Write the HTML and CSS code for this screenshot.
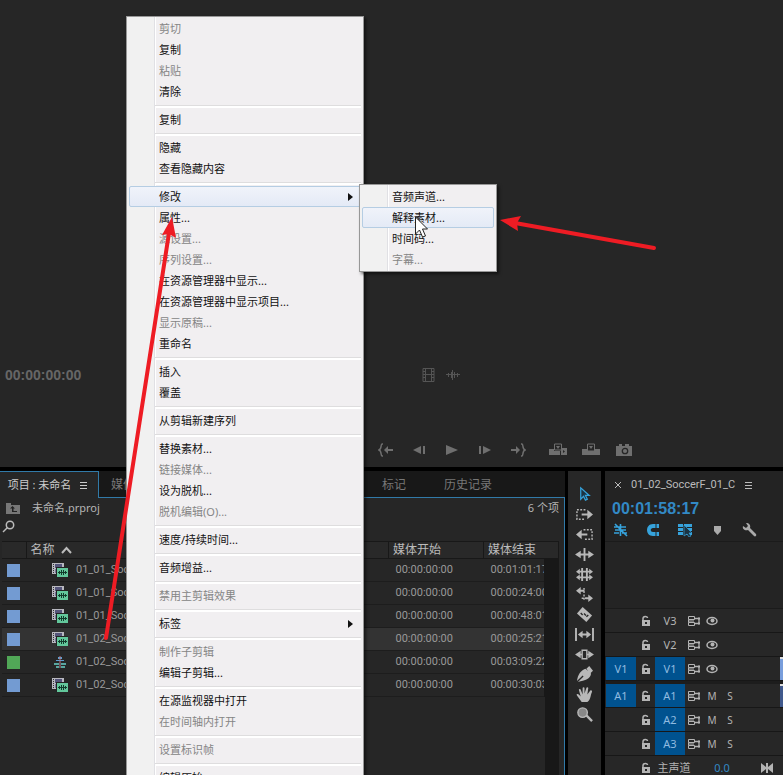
FILE: index.html
```
<!DOCTYPE html>
<html lang="zh-CN">
<head>
<meta charset="utf-8">
<title>未命名.prproj</title>
<link rel="stylesheet" href="styles.css">
</head>
<body>
<svg class="symbols" aria-hidden="true">
  <symbol id="clip" viewBox="0 0 16 14">
    <rect x="0" y="0" width="12" height="11" fill="#b8b8c0"/>
    <rect x="3" y="1" width="7" height="4" fill="#55557a"/><rect x="3" y="6" width="7" height="4" fill="#77779a"/>
    <path d="M1 1h1v1H1zM1 3h1v1H1zM1 5h1v1H1zM1 7h1v1H1zM1 9h1v1H1z" fill="#333"/>
    <rect x="4" y="4" width="12" height="10" fill="#232323"/><rect x="5" y="5" width="11" height="9" fill="#62c79b"/>
    <path d="M6 9h9v1H6zM7 8h1v3H7zM9 7h1v5H9zM11 7h1v5h-1zM13 8h1v3h-1z" fill="#123c2c"/>
  </symbol>
  <symbol id="seq" viewBox="0 0 14 14">
    <path d="M5 2h4v2H5zM3 5h8v1H3z" fill="#5a9fd0"/><path d="M1 8h5v2H1zM8 8h5v2H8zM3 11h3v2H3zM8 11h4v2H8z" fill="#58a6a0"/><path d="M6.500 1h1v12h-1z" fill="#b78"/>
  </symbol>
  <symbol id="lock" viewBox="0 0 10 12">
    <path d="M2 6V3.500C2 .8 6.500.8 6.500 3" fill="none" stroke="currentColor" stroke-width="1.500"/><path d="M1 5h8v6H1z" fill="currentColor"/><path d="M4 7h2v2H4z" fill="#232323"/>
  </symbol>
  <symbol id="sync" viewBox="0 0 12 10">
    <path d="M.5.500h6v3h-6zM.5 6.500h6v3h-6zM.5 3.500v3M1 5h5" stroke="currentColor" fill="none"/><path d="M6.500 2.500H11v5H6.500" stroke="currentColor" fill="none" stroke-width="1.300"/><path d="M10 1.500h2v2h-2zM10 6.500h2v2h-2z" fill="currentColor"/>
  </symbol>
  <symbol id="eye" viewBox="0 0 12 10">
    <ellipse cx="6" cy="5" rx="5" ry="3.500" fill="none" stroke="currentColor" stroke-width="1.500"/><circle cx="6.500" cy="4.500" r="2" fill="currentColor"/>
  </symbol>
</svg>

<main class="workspace">
  <section class="monitor" aria-label="源监视器">
    <div class="monitor-info">
      <span class="timecode">00:00:00:00</span>
      <div class="drag-icons">
        <button aria-label="仅拖动视频"><svg width="13" height="14" viewBox="0 0 13 14" fill="none" stroke="currentColor"><path d="M1 .5h11v13H1zM3.500 1v12M9.500 1v12M3.500 6.500h6M1 3.500h2.500M1 6.500h2.500M1 9.500h2.500M9.500 3.500H12M9.500 6.500H12M9.500 9.500H12"/></svg></button>
        <button aria-label="仅拖动音频"><svg width="14" height="12" viewBox="0 0 14 12" fill="none" stroke="currentColor"><path d="M0 5.500h14M2.500 4v4M5.500 3v6M6.500 1v10M8.500 3v6M11.500 4v4"/></svg></button>
      </div>
    </div>
    <div class="transport">
      <button aria-label="转到入点"><svg width="16" height="14" viewBox="0 0 16 14"><path d="M5 1H4C2.500 1 4 6 1 7c3 1 1.500 6 3 6h1" fill="none" stroke="currentColor" stroke-width="1.500"/><path d="M6 7l4-4v3h5v2h-5v3z"/></svg></button>
      <button aria-label="后退一帧"><svg width="16" height="14" viewBox="0 0 16 14"><path d="M2 7l8-4v8zM12 3h2v8h-2z"/></svg></button>
      <button aria-label="播放"><svg width="16" height="14" viewBox="0 0 16 14"><path d="M2 2l12 5-12 5z"/></svg></button>
      <button aria-label="前进一帧"><svg width="16" height="14" viewBox="0 0 16 14"><path d="M14 7L6 3v8zM2 3h2v8H2z"/></svg></button>
      <button aria-label="转到出点"><svg width="16" height="14" viewBox="0 0 16 14"><path d="M11 1h1c1.500 0 0 5 3 6-3 1-1.500 6-3 6h-1" fill="none" stroke="currentColor" stroke-width="1.500"/><path d="M10 7L6 3v3H1v2h5v3z"/></svg></button>
      <button class="insert" aria-label="插入"><svg width="18" height="13" viewBox="0 0 18 13"><path d="M0 6h5v6H0zM5 8h6v4H5zM12 5h6v7h-6z"/><path d="M5.500 1h7v6h-7z" fill="#262626" stroke="currentColor"/><path d="M7 3h4L9 6z"/><path d="M14 7l2 1.500-2 1.500z" fill="#262626"/></svg></button>
      <button aria-label="覆盖"><svg width="18" height="13" viewBox="0 0 18 13"><path d="M0 6h18v6H0z"/><path d="M5.500 1h7v7h-7z" fill="#262626" stroke="currentColor"/><path d="M7 3h4L9 6z"/></svg></button>
      <button aria-label="导出帧"><svg width="16" height="12" viewBox="0 0 16 12"><path d="M0 2h3V0h3v2h3V0h4v2h3v10H0z"/><circle cx="9" cy="7" r="2.700" fill="none" stroke="#262626" stroke-width="1.300"/></svg></button>
    </div>
  </section>

  <section class="project" aria-label="项目">
    <div class="tabs">
      <button class="tab active">项目 : 未命名 <svg width="7" height="8" viewBox="0 0 7 8"><path d="M0 1h7v1H0zM0 4h7v1H0zM0 7h7v1H0z"/></svg></button>
      <button class="tab">媒体</button>
      <button class="tab tab-mark">标记</button>
      <button class="tab tab-history">历史记录</button>
    </div>
    <div class="project-body">
      <div class="file-row">
        <svg width="14" height="12" viewBox="0 0 14 12"><path d="M0 1h5v2h9v9H0z" fill="#777"/><path d="M4 6.500L6.500 4 9 6.500H7.500V9H11v1H6V6.500z" fill="#222"/></svg>
        <span class="file-name">未命名.prproj</span>
        <span class="count">6 个项</span>
      </div>
      <div class="search-row"><button aria-label="查找"><svg width="13" height="13" viewBox="0 0 13 13" fill="none" stroke="currentColor" stroke-width="1.500"><circle cx="8" cy="5" r="3.700"/><path d="M5.500 7.500L1 12"/></svg></button></div>
      <table class="clips">
        <colgroup><col class="c-label"><col><col class="c-start"><col class="c-end"><col class="c-bar"></colgroup>
        <thead><tr><th></th><th class="name-head">名称 <svg width="11" height="8" viewBox="0 0 11 8"><path d="M1 7l4.500-5L10 7" fill="none" stroke="currentColor" stroke-width="2"/></svg></th><th>媒体开始</th><th colspan="2">媒体结束</th></tr></thead>
        <tbody>
          <tr><td><i class="swatch"></i></td><td class="name"><svg class="clip-icon"><use href="#clip"/></svg>01_01_SoccerF</td><td>00:00:00:00</td><td>00:01:01:17</td><td class="bar"></td></tr>
          <tr><td><i class="swatch"></i></td><td class="name"><svg class="clip-icon"><use href="#clip"/></svg>01_01_SoccerF</td><td>00:00:00:00</td><td>00:00:24:00</td><td class="bar"></td></tr>
          <tr><td><i class="swatch"></i></td><td class="name"><svg class="clip-icon"><use href="#clip"/></svg>01_01_SoccerF</td><td>00:00:00:00</td><td>00:00:48:01</td><td class="bar"></td></tr>
          <tr class="selected"><td><i class="swatch"></i></td><td class="name"><svg class="clip-icon"><use href="#clip"/></svg>01_02_SoccerF</td><td>00:00:00:00</td><td>00:00:25:21</td><td class="bar"></td></tr>
          <tr><td><i class="swatch green"></i></td><td class="name"><svg class="clip-icon"><use href="#seq"/></svg>01_02_SoccerF</td><td>00:00:00:00</td><td>00:03:09:22</td><td class="bar"></td></tr>
          <tr><td><i class="swatch"></i></td><td class="name"><svg class="clip-icon"><use href="#clip"/></svg>01_02_SoccerF</td><td>00:00:00:00</td><td>00:00:30:03</td><td class="bar"></td></tr>
        </tbody>
      </table>
      <div class="bar-tail"></div>
    </div>
  </section>

  <section class="tools" aria-label="工具">
    <button class="on" aria-label="选择工具"><svg viewBox="0 0 20 18"><path d="M6 2v12l3-3 2 4 2-1-2-4h4z" fill="#1b3443" stroke="currentColor" stroke-width="1.300"/></svg></button>
    <button aria-label="向前选择轨道工具"><svg viewBox="0 0 20 18"><path d="M11 4H2v10h9" fill="none" stroke="currentColor" stroke-width="1.500" stroke-dasharray="2 1.500"/><path d="M7 8h6V4l6 5-6 5v-4H7z"/></svg></button>
    <button aria-label="向后选择轨道工具"><svg viewBox="0 0 20 18"><path d="M9 4h9v10H9" fill="none" stroke="currentColor" stroke-width="1.500" stroke-dasharray="2 1.500"/><path d="M13 8H7V4L1 9l6 5v-4h6z"/></svg></button>
    <button aria-label="波纹编辑工具"><svg viewBox="0 0 20 18"><path d="M9 2h2v14H9zM0 9l6-4v3h3v2H6v3zM20 9l-6-4v3h-3v2h3v3z"/></svg></button>
    <button aria-label="滚动编辑工具"><svg viewBox="0 0 20 18"><path d="M6.500 2h2v14h-2zM11.500 2h2v14h-2zM1 6l4-3v2h10V3l4 3-4 3V7H5v2zM1 12l4-3v2h10V9l4 3-4 3v-2H5v2z"/></svg></button>
    <button aria-label="比率拉伸工具"><svg viewBox="0 0 20 18"><path d="M1 5l5-4v3h4v2H6v3zM19 13l-5-4v3h-3v2h3v3z"/><path d="M9.500 2v14M7 13h5" stroke="currentColor" stroke-width="1.500" stroke-dasharray="2 1.500"/></svg></button>
    <button aria-label="剃刀工具"><svg viewBox="0 0 20 18"><path d="M8 1l10 9-6 7L2 8z"/><path d="M6 7.500l2 2M9.500 8l2 2M12 11.500l2-2" stroke="#272727" stroke-width="1.500"/></svg></button>
    <button aria-label="外滑工具"><svg viewBox="0 0 20 18"><path d="M0 2h2v14H0zM18 2h2v14h-2zM3 9l5-4v3h4V5l5 4-5 4v-3H8v3z"/></svg></button>
    <button aria-label="内滑工具"><svg viewBox="0 0 20 18"><path d="M0 9l6-4v8zM20 9l-6-4v8z"/><path d="M7.500 4.500h5v9h-5zM5 9h2M13 9h2" fill="none" stroke="currentColor" stroke-width="1.500"/></svg></button>
    <button aria-label="钢笔工具"><svg viewBox="0 0 20 18"><path d="M12 3l3-3 4 5-3 3zM11 3l6 5c-1 6-6 7-14 9l6-6-1-1-6 6C3 9 6 5 11 3z"/></svg></button>
    <button aria-label="手形工具"><svg viewBox="0 0 20 18"><path d="M7 17l-5-7c-1-2 1-2 2-1l2 2-2-7c0-1 2-1 2 0l2 5V2c0-1 2-1 2 0v6l2-6c0-1 2-1 2 0l-1 7 3-4c1-1 2 0 2 1-2 4-1 8-5 11z"/></svg></button>
    <button aria-label="缩放工具"><svg viewBox="0 0 20 18"><circle cx="8" cy="7" r="5" fill="#888" stroke="currentColor" stroke-width="1.500"/><path d="M12 10l6 6" stroke="currentColor" stroke-width="2.500"/></svg></button>
  </section>

  <section class="timeline" aria-label="时间轴">
    <div class="seq-tab"><button aria-label="关闭"><svg width="6" height="6" viewBox="0 0 6 6"><path d="M0 0l6 6M6 0L0 6" stroke="currentColor"/></svg></button><span>01_02_SoccerF_01_C</span><button aria-label="菜单"><svg width="7" height="8" viewBox="0 0 7 8"><path d="M0 1h7v1H0zM0 4h7v1H0zM0 7h7v1H0z"/></svg></button></div>
    <div class="playhead-time">00:01:58:17</div>
    <div class="seq-tools">
      <button class="on" aria-label="嵌套"><svg width="16" height="14" viewBox="0 0 16 14" fill="none" stroke="currentColor" stroke-width="1.600"><path d="M1 4h6M8 4h5M1 10h5M9 10h5M2 7h11M7.500 1v12M2 1l12 12"/></svg></button>
      <button class="on" aria-label="对齐"><svg width="16" height="14" viewBox="0 0 16 14"><path d="M14 1H8C4 1 2 4 2 7s2 6 6 6h6V9H8c-3 0-3-4 0-4h6z"/><path d="M11 1v4M11 9v4" stroke="#232323"/></svg></button>
      <button class="on" aria-label="链接选择项"><svg width="16" height="14" viewBox="0 0 16 14"><path d="M1 1h5v3H1zM7 1h8v3H7zM1 5h5v3H1zM7 5h8v3H7zM1 9h5v3H1zM7 9h8v3H7z"/><path d="M7 2v11l3-2 2 3 2-1-2-3h3z" fill="#1b3443" stroke="currentColor" stroke-width=".7"/></svg></button>
      <button aria-label="添加标记"><svg width="16" height="14" viewBox="0 0 16 14"><path d="M5 3h7v5l-3.500 4L5 8z"/></svg></button>
      <button aria-label="时间轴显示设置"><svg width="16" height="14" viewBox="0 0 16 14"><path d="M5 0c3 0 5 2 4 5l6 6c1 2-1 3-2 2L7 7C4 8 1 6 2 3l3 2 2-2z"/></svg></button>
    </div>
    <div class="tracks">
      <div class="ruler-space"></div>
      <div class="track"><span></span><svg class="lock"><use href="#lock"/></svg><b>V3</b><svg class="sync"><use href="#sync"/></svg><svg class="sync"><use href="#eye"/></svg></div>
      <div class="track"><span></span><svg class="lock"><use href="#lock"/></svg><b>V2</b><svg class="sync"><use href="#sync"/></svg><svg class="sync"><use href="#eye"/></svg></div>
      <div class="track"><button class="patch">V1</button><svg class="lock"><use href="#lock"/></svg><button class="patch">V1</button><svg class="sync"><use href="#sync"/></svg><svg class="sync"><use href="#eye"/></svg><i class="media"></i></div>
      <div class="split"></div>
      <div class="track"><button class="patch">A1</button><svg class="lock"><use href="#lock"/></svg><button class="patch">A1</button><svg class="sync"><use href="#sync"/></svg><button>M</button><button>S</button><i class="media dim"></i></div>
      <div class="track"><span></span><svg class="lock"><use href="#lock"/></svg><button class="patch">A2</button><svg class="sync"><use href="#sync"/></svg><button>M</button><button>S</button></div>
      <div class="track"><span></span><svg class="lock"><use href="#lock"/></svg><button class="patch">A3</button><svg class="sync"><use href="#sync"/></svg><button>M</button><button>S</button></div>
      <div class="track master"><span></span><svg class="lock"><use href="#lock"/></svg><span>主声道</span><span class="level">0.0</span><svg class="sync" viewBox="0 0 12 10"><path d="M0 0l5 4V0h2v4l5-4v10L7 6v4H5V6l-5 4z"/></svg></div>
    </div>
  </section>
</main>

<ul class="menu">
  <li><button disabled>剪切</button></li>
  <li><button>复制</button></li>
  <li><button disabled>粘贴</button></li>
  <li><button>清除</button></li>
  <li class="sep"></li>
  <li><button>复制</button></li>
  <li class="sep"></li>
  <li><button>隐藏</button></li>
  <li><button>查看隐藏内容</button></li>
  <li class="sep"></li>
  <li><button class="hot more">修改</button></li>
  <li><button>属性...</button></li>
  <li><button disabled>源设置...</button></li>
  <li><button disabled>序列设置...</button></li>
  <li><button>在资源管理器中显示...</button></li>
  <li><button>在资源管理器中显示项目...</button></li>
  <li><button disabled>显示原稿...</button></li>
  <li><button>重命名</button></li>
  <li class="sep"></li>
  <li><button>插入</button></li>
  <li><button>覆盖</button></li>
  <li class="sep"></li>
  <li><button>从剪辑新建序列</button></li>
  <li class="sep"></li>
  <li><button>替换素材...</button></li>
  <li><button disabled>链接媒体...</button></li>
  <li><button>设为脱机...</button></li>
  <li><button disabled>脱机编辑(O)...</button></li>
  <li class="sep"></li>
  <li><button>速度/持续时间...</button></li>
  <li class="sep"></li>
  <li><button>音频增益...</button></li>
  <li class="sep"></li>
  <li><button disabled>禁用主剪辑效果</button></li>
  <li class="sep"></li>
  <li><button class="more">标签</button></li>
  <li class="sep"></li>
  <li><button disabled>制作子剪辑</button></li>
  <li><button>编辑子剪辑...</button></li>
  <li class="sep"></li>
  <li><button>在源监视器中打开</button></li>
  <li><button disabled>在时间轴内打开</button></li>
  <li class="sep"></li>
  <li><button disabled>设置标识帧</button></li>
  <li class="sep"></li>
  <li><button>编辑原始</button></li>
</ul>
<ul class="menu submenu">
  <li><button>音频声道...</button></li>
  <li><button class="hot">解释素材...</button></li>
  <li><button>时间码...</button></li>
  <li><button disabled>字幕...</button></li>
</ul>

<svg class="marks" width="783" height="660" viewBox="0 0 783 660" aria-hidden="true">
  <path d="M415.500 217v17l4-4 3 7 3-1-3-7h5z" fill="#fff" stroke="#222"/>
  <g stroke="#ee1c24" stroke-width="4" stroke-linecap="round"><path d="M654 248L515 223"/><path d="M106 638L169 233"/></g>
  <path d="M500 220l21-4-4 7 1 8zM172 217l4 21-7-4-7 1z" fill="#ee1c24"/>
</svg>
</body>
</html>
```
FILE: styles.css
```
* { box-sizing: border-box; }
html, body { height: 100%; }
body {
  margin: 0;
  overflow: hidden;
  background: #000;
  color: #b4b4b4;
  font: 11px/16px "Noto Sans", "Noto Sans CJK SC", sans-serif;
}
button {
  display: flex;
  align-items: center;
  justify-content: center;
  margin: 0;
  padding: 0;
  border: 0;
  background: none;
  color: inherit;
  font: inherit;
}
svg { flex: none; }
svg:not([fill]) { fill: currentColor; }
.symbols { position: absolute; width: 0; height: 0; }

.workspace {
  display: grid;
  grid-template-columns: minmax(0, 565fr) 33px minmax(0, 179fr);
  grid-template-rows: auto 1fr;
  column-gap: 3px;
  row-gap: 4px;
  height: 100%;
}

/* Source monitor */
.monitor {
  grid-column: 1 / -1;
  background: #262626;
  color: #6f6f6f;
  padding-top: 366px;
}
.monitor-info { display: flex; align-items: center; height: 18px; padding-left: 5px; }
.timecode { width: 417px; font: bold 14px/18px "Liberation Sans", sans-serif; color: #666; }
.drag-icons { display: flex; gap: 11px; color: #555; }
.transport {
  display: flex;
  align-items: center;
  gap: 17px;
  padding: 58px 0 10px 378px;
}
.transport button { width: 16px; height: 15px; }
.transport .insert { margin-left: 7px; }

/* Project panel */
.project { display: flex; flex-direction: column; background: #262626; min-width: 0; }
.tabs {
  display: flex;
  height: 27px;
  background: #181818;
  box-shadow: inset 0 -1px #317aa8;
  color: #777;
  font-size: 12px;
}
.tab { padding: 0 12px; white-space: nowrap; }
.tab.active {
  width: 99px;
  gap: 9px;
  padding: 0 3px 0 0;
  background: #262626;
  border: 1px solid #317aa8;
  border-width: 1px 1px 0 0;
  color: #ccc;
  font-size: 11px;
}
.tab-mark { margin-left: auto; padding: 0 19px; }
.tab-history { padding: 0 73px 0 19px; }
.project-body {
  display: flex;
  flex-direction: column;
  flex: 1;
  padding: 0 5px 0 2px;
  border-right: 1px solid #317aa8;
}
.file-row { display: flex; align-items: center; height: 19px; padding-left: 4px; }
.file-name { margin-left: 12px; }
.count { margin-left: auto; }
.search-row { height: 24px; padding-top: 3px; color: #bbb; }
.clips {
  width: 100%;
  table-layout: fixed;
  border-collapse: collapse;
  font-family: Roboto, "Noto Sans CJK SC", sans-serif;
}
.c-label { width: 24px; }
.c-start { width: 95px; }
.c-end { width: 61px; }
.c-bar { width: 14px; }
.clips th {
  height: 17px;
  padding: 0 0 0 4px;
  border: 1px solid #181818;
  border-width: 1px 1px 1px 0;
  background: #292929;
  color: #bbb;
  font-size: 12px;
  font-weight: normal;
  line-height: 15px;
  text-align: left;
}
.clips .name-head svg { margin-left: 4px; }
.clips td {
  height: 23px;
  padding: 0 0 0 7px;
  border-bottom: 1px solid #1d1d1d;
  overflow: hidden;
  color: #999;
  white-space: nowrap;
}
.clips td:first-child { padding-left: 5px; }
.clips .bar { background: #181818; border-color: #181818; }
.selected td { background: #333; }
.clips .name { padding-left: 26px; }
.name svg { vertical-align: middle; }
.clip-icon { width: 16px; height: 14px; margin-right: 8px; }
.swatch { display: block; width: 13px; height: 13px; background: #739bd2; }
.green { background: #51a757; }
.bar-tail { flex: 1; width: 14px; margin-left: auto; background: #181818; }

/* Tool palette */
.tools { padding-top: 13px; background: #272727; color: #b8b8b8; }
.tools button { width: 100%; height: 20px; }
.tools svg { width: 19px; height: 17px; }
.on, .tools .on { color: #36a3dc; }

/* Timeline */
.timeline { background: #232323; min-width: 0; overflow: hidden; margin-left: 1px; }
.seq-tab { display: flex; align-items: center; gap: 10px; height: 28px; padding-left: 10px; color: #bbb; }
.seq-tab span { font-family: Roboto, sans-serif; }
.playhead-time { padding-left: 7px; font: bold 16px/20px "Liberation Sans", sans-serif; color: #3289c5; }
.seq-tools { display: flex; gap: 16px; height: 22px; align-items: center; padding-left: 8px; color: #aaa; }
.ruler-space { height: 68px; border: 1px solid #1b1b1b; border-width: 1px 0; background: #242424; }
.track {
  display: grid;
  grid-template-columns: 30px 19px 30px 18px 18px 18px 1fr 3px;
  align-items: center;
  justify-items: center;
  height: 24px;
  padding-left: 1px;
  border-bottom: 1px solid #171717;
  background: #272727;
}
.track b { font-weight: normal; }
.patch { width: 30px; height: 23px; background: #00528f; color: #90bbe0; }
.track button:not(.patch) { font-size: 10px; }
.lock { width: 10px; height: 12px; }
.sync { width: 12px; height: 10px; }
.media { grid-column: 8; width: 3px; height: 23px; background: #789ddb; border-top: 2px solid #ddd; }
.dim { background: #40598c; }
.split { height: 3px; background: #1d1d1d; }
.master { grid-template-columns: 30px 19px 38px 58px 1fr; }
.level { color: #3289c5; }

/* Context menus */
.menu {
  position: absolute;
  top: 16px;
  left: 126px;
  width: 238px;
  margin: 0;
  padding: 1px 2px;
  list-style: none;
  border: 1px solid #979797;
  background: linear-gradient(90deg, #f1f1f1 27px, #e0e0e4 27px, #e0e0e4 28px, #fff 28px, #fff 29px, #f1eff1 29px);
  box-shadow: 2px 2px 3px #0008;
  color: #111;
}
.menu button {
  justify-content: flex-start;
  width: 100%;
  height: 21px;
  padding-left: 29px;
  border: 1px solid transparent;
  border-radius: 2px;
}
.menu button:disabled { color: #858585; }
.menu .hot { background: linear-gradient(#f0f3fa, #e4eaf6); border-color: #b5cde3; }
.more::after {
  content: "";
  margin-left: auto;
  margin-right: 7px;
  border: 4px solid transparent;
  border-left: 5px solid #111;
  border-right: 0;
}
.sep { height: 7px; margin-left: 26px; padding-top: 3px; }
.sep::before { content: ""; display: block; height: 2px; background: #fff; border-top: 1px solid #deddde; }
.submenu { top: 184px; left: 359px; width: 138px; }
.marks { position: absolute; top: 0; left: 0; pointer-events: none; }
```
